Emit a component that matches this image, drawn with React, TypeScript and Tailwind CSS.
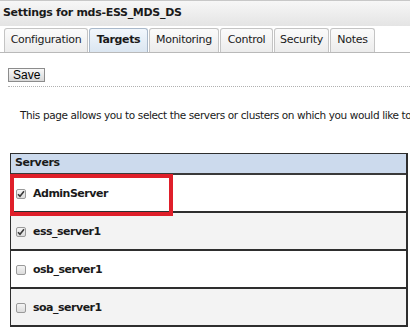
import React from 'react';

const tabs = [
  { label: 'Configuration', w: 'w-[84px]' },
  { label: 'Targets', w: 'w-[59px]' },
  { label: 'Monitoring', w: 'w-[70px]' },
  { label: 'Control', w: 'w-[53px]' },
  { label: 'Security', w: 'w-[55px]' },
  { label: 'Notes', w: 'w-[45px]' },
];

const servers = [
  { name: 'AdminServer', checked: true },
  { name: 'ess_server1', checked: true },
  { name: 'osb_server1', checked: false },
  { name: 'soa_server1', checked: false },
];

const Check: React.FC<{ checked: boolean }> = ({ checked }) => (
  <span className="w-[10px] h-[10px] rounded-[2px] border border-[#9a9a9a] bg-gradient-to-b from-[#f4f4f4] to-[#dcdcdc] flex items-center justify-center shrink-0">
    {checked && (
      <svg width="8" height="8" viewBox="0 0 8 8">
        <path d="M1 4.2 L3 6.3 L7 1.3" fill="none" stroke="#3a3a3a" strokeWidth="1.6" />
      </svg>
    )}
  </span>
);

export default function App() {
  return (
    <div className="w-[410px] h-[328px] overflow-hidden bg-white text-[#1a1a1a]" style={{ fontFamily: '"DejaVu Sans", Tahoma, sans-serif' }}>
      <div className="h-[26px] border-t border-[#c8c8c8] bg-gradient-to-b from-[#f7f7f7] to-[#e4e4e4] flex items-center pl-[3px]">
        <span className="text-[11px] font-bold tracking-[-0.3px]">Settings for mds-ESS_MDS_DS</span>
      </div>

      <div className="mt-[3px] flex gap-[1px] pl-[4px] border-b border-[#b9b9b9] h-[24px] items-end">
        {tabs.map((t) => (
          <div
            key={t.label}
            className={
              t.label === 'Targets'
                ? `${t.w} h-[24px] flex items-center justify-center rounded-t-[3px] border border-b-0 border-[#a9b8c9] bg-gradient-to-b from-[#f2f7fc] to-[#dbe6f1] text-[11px] font-bold tracking-[-0.4px]`
                : `${t.w} h-[24px] flex items-center justify-center rounded-t-[3px] border border-b-0 border-[#c4c4c4] bg-gradient-to-b from-[#fbfbfb] to-[#ececec] text-[11px] tracking-[-0.3px]`
            }
          >
            {t.label}
          </div>
        ))}
      </div>

      <div className="pl-[8px] pt-[15px]">
        <button className="h-[14px] px-[4px] border border-[#8c8c8c] bg-gradient-to-b from-[#f8f8f8] to-[#d8d8d8] text-[12px] leading-none text-black flex items-center" style={{ fontFamily: '"Liberation Sans", Arial, sans-serif' }}>
          Save
        </button>
      </div>
      <div className="mt-[4px] ml-[8px] border-t border-dotted border-[#b0b0b0]" />

      <p className="pl-[20px] pt-[21px] text-[10.5px] whitespace-nowrap tracking-[-0.38px]">
        This page allows you to select the servers or clusters on which you would like to
      </p>

      <div className="mt-[29px] ml-[10px] w-[398px] border-l border-t border-r-2 border-[#2e2e2e]">
        <div className="h-[21px] bg-[#ccdaed] border-b-2 border-[#3a3a3a] flex items-center pl-[4px] text-[11px] font-bold tracking-[-0.4px]">
          Servers
        </div>
        {servers.map((s, i) => (
          <div
            key={s.name}
            className={`relative h-[38px] flex items-center gap-[7px] pl-[5px] pt-[2px] text-[11px] font-bold tracking-[-0.5px] border-b-2 border-[#2e2e2e] ${i % 2 === 1 ? 'bg-[#f3f3f3]' : 'bg-white'}`}
          >
            <Check checked={s.checked} />
            <span>{s.name}</span>
            {i === 0 && (
              <div className="absolute z-10 left-[-1px] top-[-1px] w-[163px] h-[42px] border-[4px] border-[#df1f2a]" />
            )}
          </div>
        ))}
      </div>
    </div>
  );
}
